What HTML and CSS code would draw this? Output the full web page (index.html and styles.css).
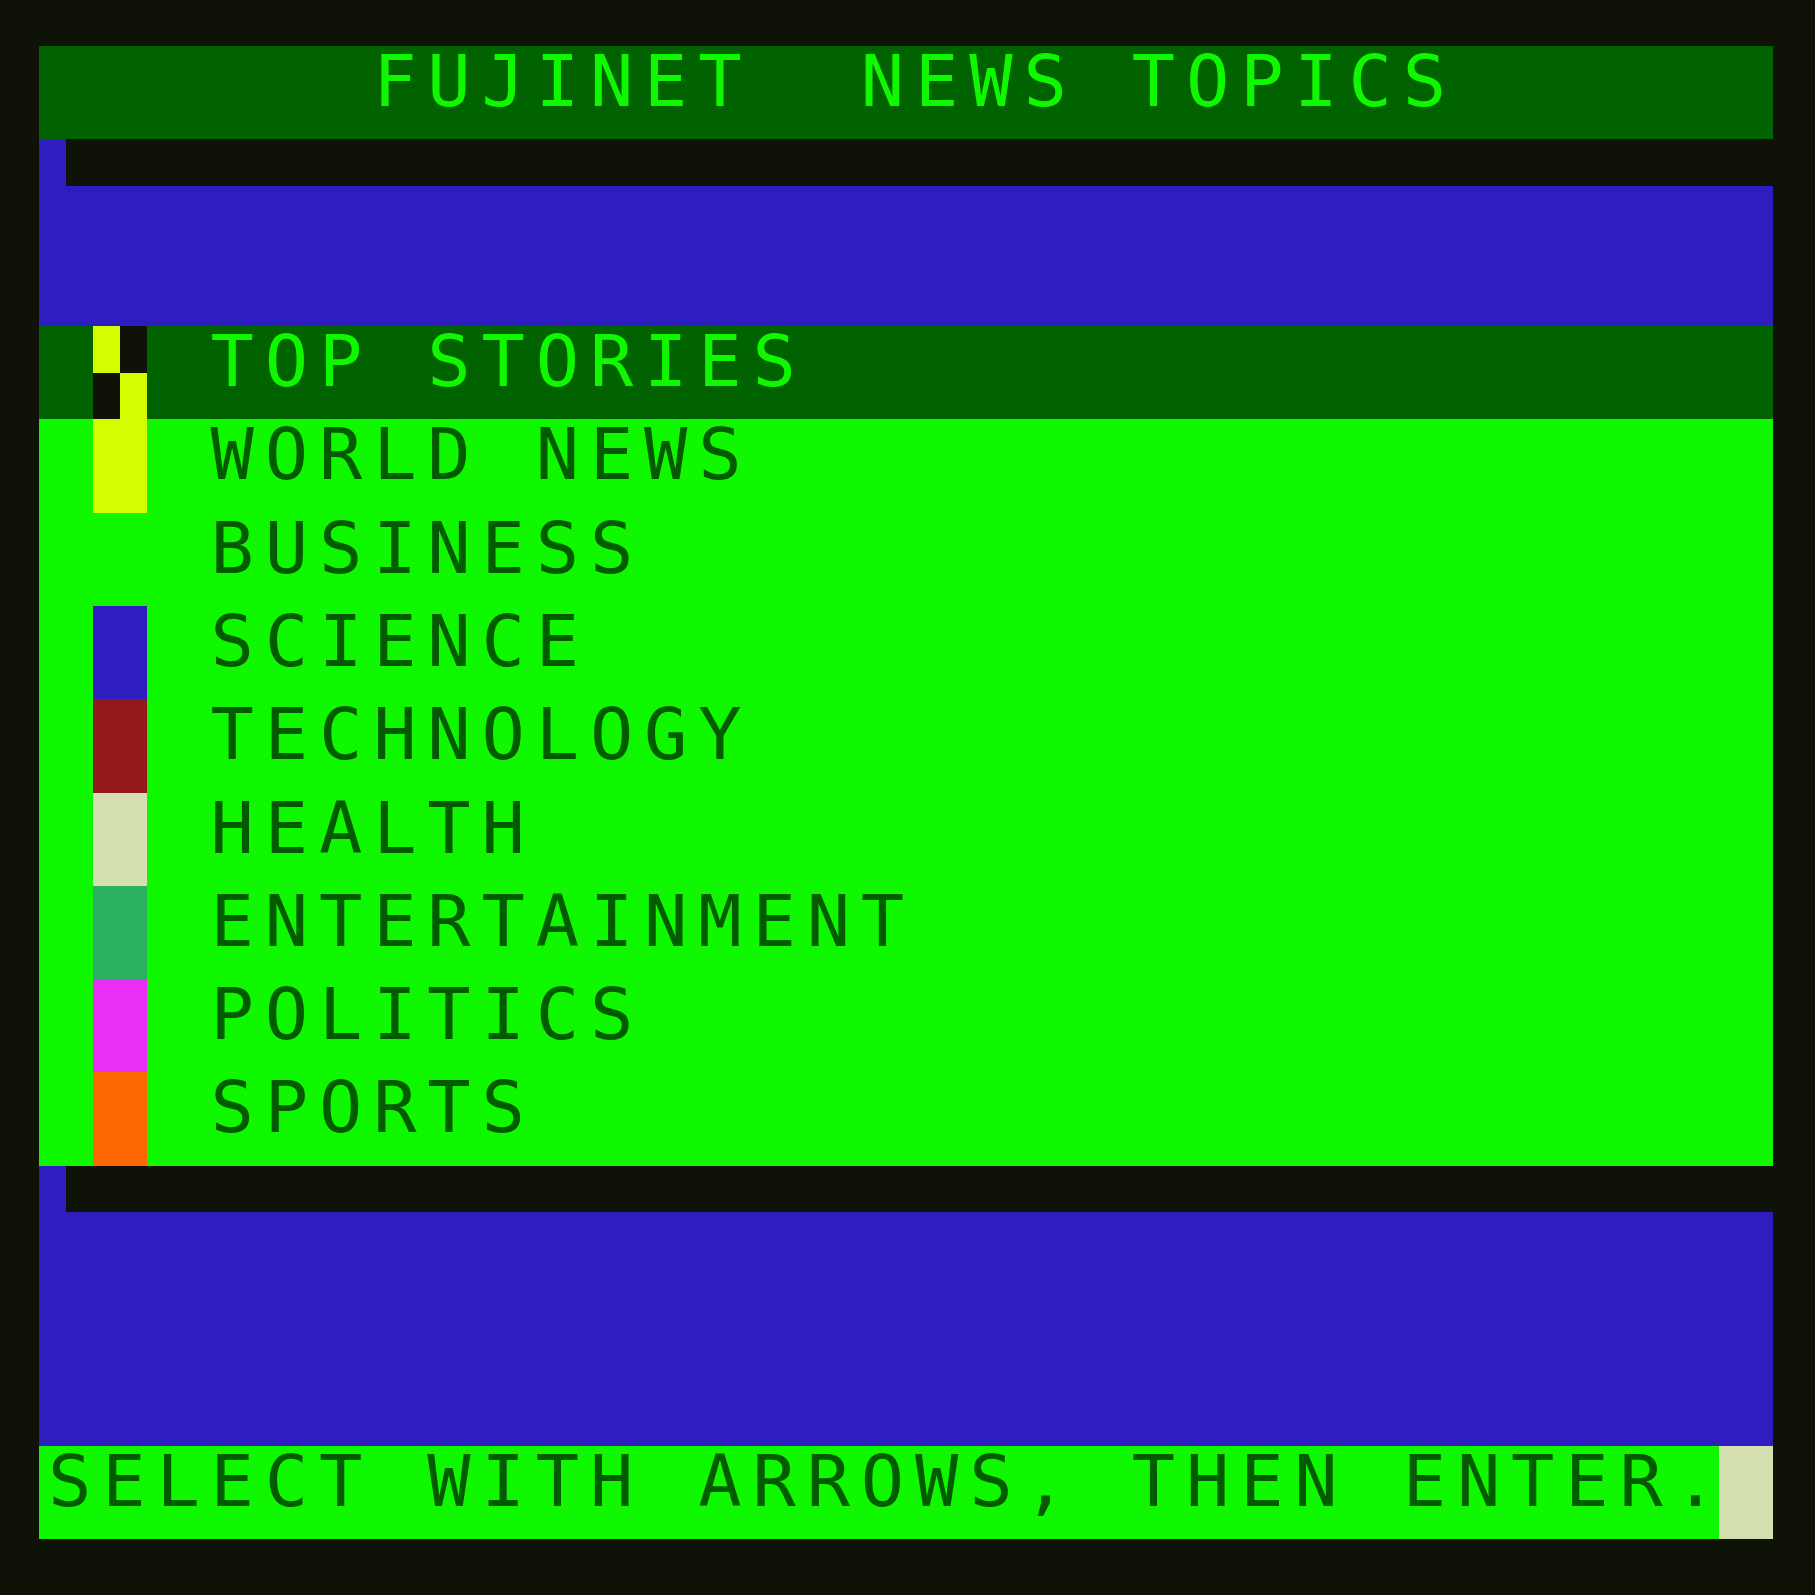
FILE: index.html
```html
<!DOCTYPE html>
<html lang="en">
<head>
  <meta charset="UTF-8">
  <meta name="viewport" content="width=device-width, initial-scale=1.0">
  <title>FujiNet News Topics</title>
  <link rel="stylesheet" href="styles.css">
</head>
<body>
  <div class="screen">
    <header class="title-bar">
      <span class="text">FUJINET  NEWS TOPICS</span>
    </header>

    <div class="band band-2">
      <div class="band-top"></div>
    </div>

    <ul class="topics">
      <li class="topic selected">
        <span class="swatch checker">
          <i class="yellow"></i><i></i><i></i><i class="yellow"></i>
        </span>
        <span class="text">TOP STORIES</span>
      </li>
      <li class="topic">
        <span class="swatch yellow"></span>
        <span class="text">WORLD NEWS</span>
      </li>
      <li class="topic">
        <span class="swatch green"></span>
        <span class="text">BUSINESS</span>
      </li>
      <li class="topic">
        <span class="swatch blue"></span>
        <span class="text">SCIENCE</span>
      </li>
      <li class="topic">
        <span class="swatch red"></span>
        <span class="text">TECHNOLOGY</span>
      </li>
      <li class="topic">
        <span class="swatch buff"></span>
        <span class="text">HEALTH</span>
      </li>
      <li class="topic">
        <span class="swatch cyan"></span>
        <span class="text">ENTERTAINMENT</span>
      </li>
      <li class="topic">
        <span class="swatch magenta"></span>
        <span class="text">POLITICS</span>
      </li>
      <li class="topic">
        <span class="swatch orange"></span>
        <span class="text">SPORTS</span>
      </li>
    </ul>

    <div class="band band-3">
      <div class="band-top"></div>
    </div>

    <footer class="status">
      <span class="text">SELECT WITH ARROWS, THEN ENTER.</span>
      <span class="cursor"></span>
    </footer>
  </div>
</body>
</html>
```

FILE: styles.css
```css
:root {
  --col: 54.1875px;
  --row: 93.3125px;
  --black: #0e1207;
  --dkgreen: #016200;
  --green: #10f800;
  --ink: #035b00;
  --blue: #2e1ec0;
  --yellow: #d5fd00;
  --red: #93191b;
  --buff: #d5e0b0;
  --cyan: #2ab15f;
  --magenta: #e92ef5;
  --orange: #ff6800;
}

* {
  margin: 0;
  padding: 0;
  box-sizing: border-box;
}

body {
  background-color: var(--black);
  font-family: 'DejaVu Sans Mono', monospace;
}

.screen {
  width: 1734px;
  height: 1493px;
  margin: 46px 0 0 39px;
  display: flex;
  flex-direction: column;
}

/* one line of 32 character cells */
.text {
  font-size: 72px;
  line-height: 71px;
  letter-spacing: 10.84px;
  white-space: pre;
  padding-left: 9px;
}

.title-bar {
  height: var(--row);
  background-color: var(--dkgreen);
  color: var(--green);
  padding-left: calc(var(--col) * 6);
}

.band {
  background-color: var(--blue);
}

.band-2 {
  height: calc(var(--row) * 2);
}

.band-3 {
  height: calc(var(--row) * 3);
}

.band-top {
  height: calc(var(--row) / 2);
  margin-left: calc(var(--col) / 2);
  background-color: var(--black);
}

.topics {
  list-style: none;
  background-color: var(--green);
  color: var(--ink);
}

.topic {
  height: var(--row);
  display: flex;
  align-items: flex-start;
}

.topic.selected {
  background-color: var(--dkgreen);
  color: var(--green);
}

.swatch {
  flex: none;
  width: var(--col);
  height: 100%;
  margin: 0 var(--col);
}

.checker {
  display: grid;
  grid-template-columns: 1fr 1fr;
  grid-template-rows: 1fr 1fr;
}

.checker i {
  background-color: var(--black);
}

.yellow, .checker i.yellow { background-color: var(--yellow); }
.green { background-color: var(--green); }
.blue { background-color: var(--blue); }
.red { background-color: var(--red); }
.buff { background-color: var(--buff); }
.cyan { background-color: var(--cyan); }
.magenta { background-color: var(--magenta); }
.orange { background-color: var(--orange); }

.status {
  height: var(--row);
  display: grid;
  grid-template-columns: minmax(0, 1fr) var(--col);
  background-color: var(--green);
  color: var(--ink);
}

.cursor {
  background-color: var(--buff);
}
```
